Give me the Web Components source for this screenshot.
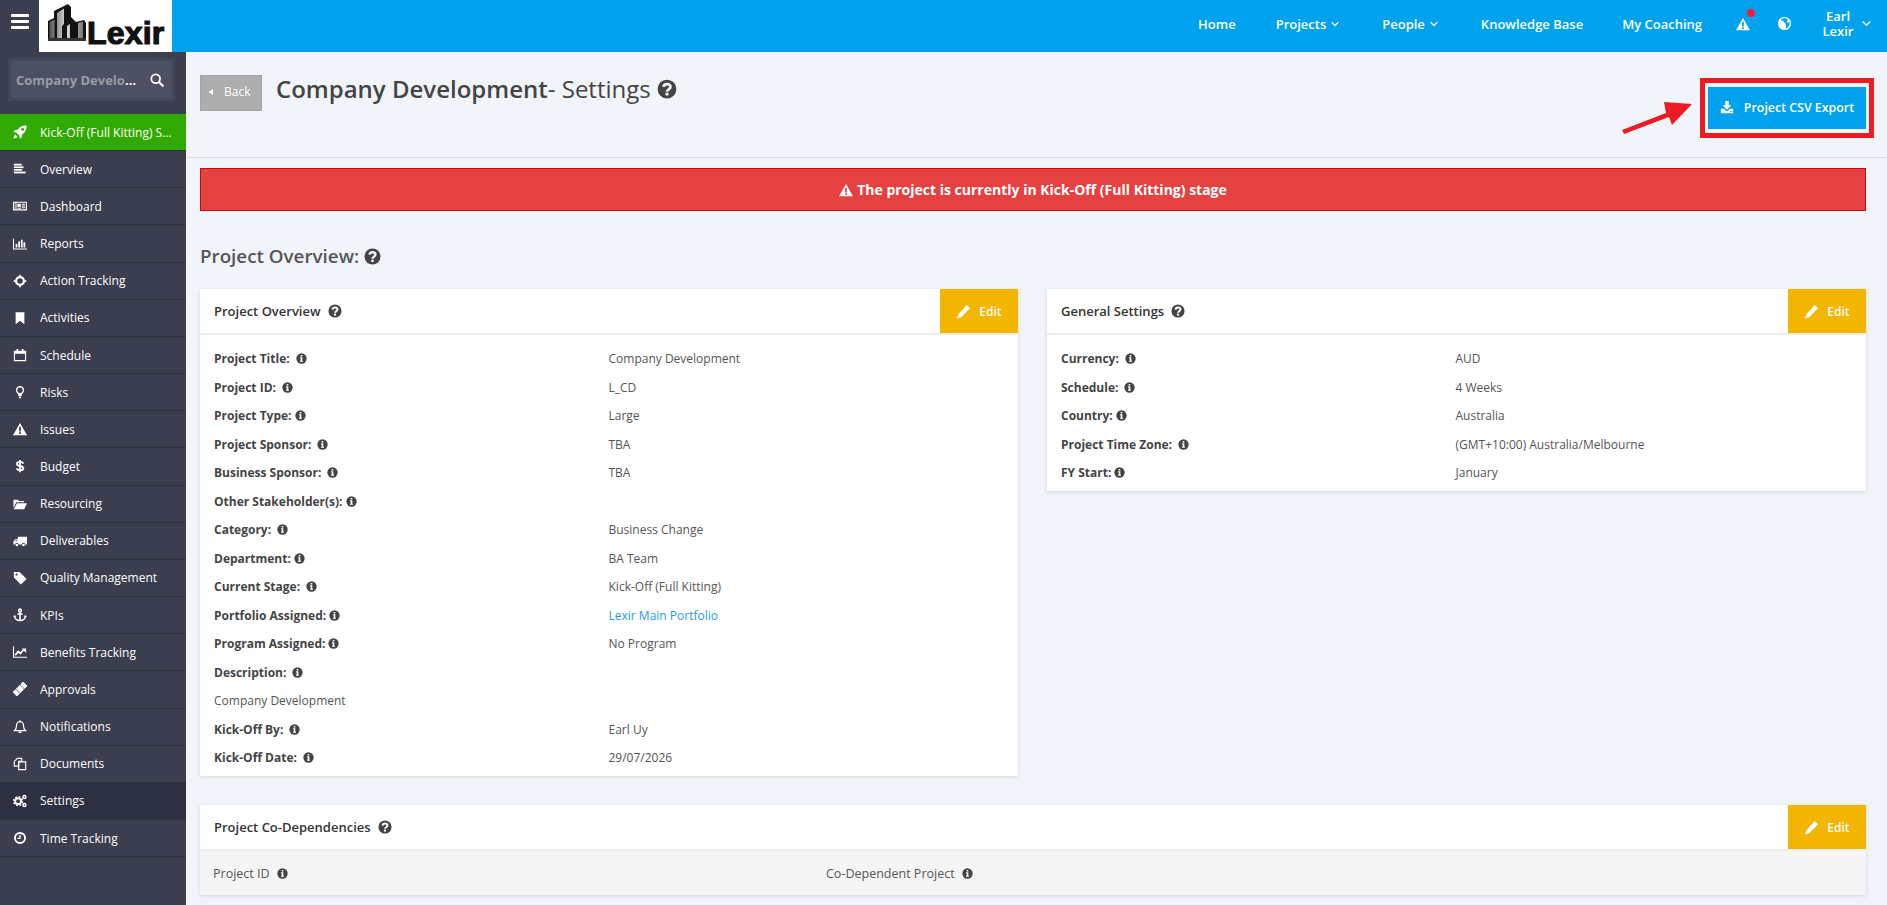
<!DOCTYPE html>
<html lang="en"><head><meta charset="utf-8"><title>Lexir</title>
<style>
html,body{margin:0;padding:0;height:905px;overflow:hidden;background:#f1f4f8;font-family:"Open Sans",sans-serif;color:#444}
x-app{--cut:#fff}
</style></head><body>
<x-app>
  <x-topbar slot="top"></x-topbar>
  <x-sidebar slot="side">
    <x-nav-item icon="rocket" kind="stage">Kick-Off (Full Kitting) Stage</x-nav-item>
    <x-nav-item icon="overview">Overview</x-nav-item>
    <x-nav-item icon="dash">Dashboard</x-nav-item>
    <x-nav-item icon="chart">Reports</x-nav-item>
    <x-nav-item icon="cross">Action Tracking</x-nav-item>
    <x-nav-item icon="bookmark">Activities</x-nav-item>
    <x-nav-item icon="calendar">Schedule</x-nav-item>
    <x-nav-item icon="bulb">Risks</x-nav-item>
    <x-nav-item icon="warn">Issues</x-nav-item>
    <x-nav-item icon="dollar">Budget</x-nav-item>
    <x-nav-item icon="folder">Resourcing</x-nav-item>
    <x-nav-item icon="truck">Deliverables</x-nav-item>
    <x-nav-item icon="tag">Quality Management</x-nav-item>
    <x-nav-item icon="anchor">KPIs</x-nav-item>
    <x-nav-item icon="line">Benefits Tracking</x-nav-item>
    <x-nav-item icon="ticket">Approvals</x-nav-item>
    <x-nav-item icon="bell">Notifications</x-nav-item>
    <x-nav-item icon="files">Documents</x-nav-item>
    <x-nav-item icon="cogs" kind="active">Settings</x-nav-item>
    <x-nav-item icon="clock">Time Tracking</x-nav-item>
  </x-sidebar>
  <x-page-header slot="main"></x-page-header>
  <x-content slot="main">
    <x-alert>The project is currently in Kick-Off (Full Kitting) stage</x-alert>
    <x-heading>Project Overview:</x-heading>
    <x-columns>
      <x-panel heading="Project Overview" edit>
        <x-row gap="6"><span slot="label">Project Title:</span>Company Development</x-row>
        <x-row gap="6"><span slot="label">Project ID:</span>L_CD</x-row>
        <x-row gap="3"><span slot="label">Project Type:</span>Large</x-row>
        <x-row gap="6"><span slot="label">Project Sponsor:</span>TBA</x-row>
        <x-row gap="6"><span slot="label">Business Sponsor:</span>TBA</x-row>
        <x-row gap="3"><span slot="label">Other Stakeholder(s):</span></x-row>
        <x-row gap="6"><span slot="label">Category:</span>Business Change</x-row>
        <x-row gap="3"><span slot="label">Department:</span>BA Team</x-row>
        <x-row gap="6"><span slot="label">Current Stage:</span>Kick-Off (Full Kitting)</x-row>
        <x-row gap="3"><span slot="label">Portfolio Assigned:</span><x-link>Lexir Main Portfolio</x-link></x-row>
        <x-row gap="3"><span slot="label">Program Assigned:</span>No Program</x-row>
        <x-row gap="6"><span slot="label">Description:</span></x-row>
        <x-row plain>Company Development</x-row>
        <x-row gap="6"><span slot="label">Kick-Off By:</span>Earl Uy</x-row>
        <x-row gap="6"><span slot="label">Kick-Off Date:</span>29/07/2026</x-row>
      </x-panel>
      <x-panel heading="General Settings" edit>
        <x-row gap="6"><span slot="label">Currency:</span>AUD</x-row>
        <x-row gap="6"><span slot="label">Schedule:</span>4 Weeks</x-row>
        <x-row gap="3"><span slot="label">Country:</span>Australia</x-row>
        <x-row gap="6"><span slot="label">Project Time Zone:</span>(GMT+10:00) Australia/Melbourne</x-row>
        <x-row gap="3"><span slot="label">FY Start:</span>January</x-row>
      </x-panel>
    </x-columns>
    <x-panel heading="Project Co-Dependencies" edit flush>
      <x-table-head></x-table-head>
    </x-panel>
  </x-content>
</x-app>
<script>
const ICONS={
 rocket:'<path fill-rule="evenodd" d="M15.5.5C11 .2 7.8 2 5.3 5.4L1.9 6 .5 8.3l3.2.3 3.7 3.7.3 3.2 2.3-1.4.6-3.4C14 8.2 15.8 5 15.5.5zM11 3.4a1.6 1.6 0 1 1 0 3.2 1.6 1.6 0 0 1 0-3.2z"/><path d="M2.6 10.8C1.4 11.8.8 13.6.6 15.4c1.8-.2 3.6-.8 4.6-2z"/>',
 overview:'<rect x="1" y="2" width="9" height="2"/><rect x="1" y="5" width="11" height="2"/><rect x="1" y="8" width="9.500" height="2"/><rect x="1" y="11" width="13.500" height="2"/>',
 dash:'<path fill-rule="evenodd" d="M0 3h16v10H0zM1.500 4.200v7.600h1.300V4.200zM4 4.200v7.600h10.800V4.200z"/><path d="M5 5.500h4v4H5zM10 5.500h4v1h-4zM10 7.500h4v1h-4zM10 9.500h4v1h-4zM5 10.500h4v.8H5z"/>',
 chart:'<path d="M0 2h1.200v11H16v1.200H0z"/><path d="M3 8h2v4H3zM6 5h2v7H6zM9 3h2v9H9zM12 6h2v6h-2z"/>',
 cross:'<circle cx="8" cy="8" r="4.500" fill="none" stroke="currentColor" stroke-width="2.600"/><path d="M7 .8h2v3H7zM7 12.200h2v3H7zM.8 7h3v2h-3zM12.200 7h3v2h-3z"/>',
 bookmark:'<path d="M3 1.500h10v13.500L8 11l-5 4z"/>',
 calendar:'<path fill-rule="evenodd" d="M1 3h14v12H1zM2.300 6.500v7.200h11.400V6.500z"/><path d="M4 1h2v3.500H4zM10 1h2v3.500h-2z"/>',
 bulb:'<circle cx="8" cy="6" r="3.900" fill="none" stroke="currentColor" stroke-width="1.700"/><path d="M6 10h4v2.500H6zM6.800 13h2.400v2H6.800z"/>',
 warn:'<path fill-rule="evenodd" d="M8 1l8 14H0zM7 5.500v5.300h2V5.500zM7 11.800v2h2v-2z"/>',
 dollar:'<path fill="none" stroke="currentColor" stroke-width="2.200" d="M11.800 5.300C11.300 4 10 3.300 8 3.300S4.500 4.200 4.500 5.600 6 7.500 8 8s3.800 1.100 3.800 2.600-1.700 2.300-3.800 2.300-3.400-.8-3.900-2.100"/><path d="M7 1h2v14H7z"/>',
 folder:'<path d="M.5 3h5L7 4.500h5.500V6H3.800L.5 12.500z"/><path d="M4.500 7H16l-3.200 7H.8z"/>',
 truck:'<path fill-rule="evenodd" d="M5.500 3H16v9h-2a2 2 0 0 0-4 0H6.500a2 2 0 0 0-4 0H.5V8.500L2.500 6h3zM2.200 8.200h2.300V7H3.200z"/><circle cx="4.500" cy="12.500" r="1.500"/><circle cx="12" cy="12.500" r="1.500"/>',
 tag:'<path fill-rule="evenodd" d="M1 1h6.500L15.500 9 9 15.500 1 7.500zM4 2.800a1.300 1.300 0 1 0 0 2.600 1.300 1.300 0 0 0 0-2.600z"/>',
 anchor:'<g fill="none" stroke="currentColor" stroke-width="1.800"><circle cx="8" cy="2.800" r="1.500"/><path d="M8 4.300V14M5 6.800h6M1.800 9.500c0 3 3 4.800 6.200 4.800s6.200-1.800 6.200-4.800"/></g><path d="M0 10l2-2 2 2zM12 10l2-2 2 2z"/>',
 line:'<path d="M0 1.500h1.200v12H16v1.200H0z"/><path fill="none" stroke="currentColor" stroke-width="2" d="M2.500 11.500l3.500-4 2.500 2.200 3.300-4"/><path d="M10 4h5v5z"/>',
 ticket:'<g transform="rotate(-45 8 8)"><rect x="-.5" y="4.500" width="17" height="7"/><path stroke="var(--cut-side,#3a3e4e)" stroke-width="1.200" stroke-dasharray="1.300 1" d="M4.500 4.500v7M11.500 4.500v7"/></g>',
 bell:'<path fill="none" stroke="currentColor" stroke-width="1.400" d="M8 2c2.800 0 4 2 4 4.500 0 3 .8 4.500 2.300 5.700H1.700C3.200 11 4 9.500 4 6.500 4 4 5.200 2 8 2z"/><path d="M7 .6h2V2.500H7zM6 13h4a2 2 0 0 1-4 0z"/>',
 files:'<g fill="none" stroke="currentColor" stroke-width="1.300"><path d="M5 1.500h5v3.500H6.500v5.500H1.500V5z"/><path d="M6.500 5.500H14.500V14.500H6.500z"/></g>',
 cogs:'<circle cx="5.800" cy="8.200" r="3.300" fill="none" stroke="currentColor" stroke-width="2.200"/><circle cx="5.800" cy="8.200" r="5" fill="none" stroke="currentColor" stroke-width="1.800" stroke-dasharray="2 1.930"/><circle cx="13" cy="3.500" r="1.700" fill="none" stroke="currentColor" stroke-width="1.700"/><circle cx="13" cy="12.500" r="1.700" fill="none" stroke="currentColor" stroke-width="1.700"/>',
 clock:'<circle cx="8" cy="8" r="5.800" fill="none" stroke="currentColor" stroke-width="2.200"/><path d="M7.200 4.500h1.600v4.700H5V7.800h2.200z"/>',
 search:'<circle cx="6.500" cy="6.500" r="5" fill="none" stroke="currentColor" stroke-width="2"/><path stroke="currentColor" stroke-width="2.600" stroke-linecap="round" d="M10.500 10.500l4 4"/>',
 download:'<path d="M6 1h4v5h3L8 11 3 6h3z"/><path fill-rule="evenodd" d="M1 10h3.500L8 13l3.500-3H15v5H1zM11.500 12.700v.9h.9v-.9zM13.200 12.700v.9h.9v-.9z"/>',
 pencil:'<path d="M11.500 1L15 4.500 5.500 14 1 15.500l1.500-4.500z"/>',
 globe:'<path fill-rule="evenodd" d="M8 1a7 7 0 1 1 0 14A7 7 0 0 1 8 1zM4 4.500c1.500.3 3 .8 3.500 2 .6 1.200 2 1.300 2 2.800 0 1.300.7 2.500-.5 4.200 2-.5 4.500-2.500 4.500-5.500 0-.7-.1-1.200-.3-1.800L11 7.500c-.7-1-.3-2.700.8-3.700-1-.8-2.300-1.300-3.800-1.300-1.600 0-3 .8-4 2z"/>',
 chevron:'<path fill="none" stroke="currentColor" stroke-width="2" d="M2.500 5l5.500 5.500L13.500 5"/>',
 back:'<path d="M11 3v10L4 8z"/>',
 info:'<circle cx="8" cy="8" r="7.500"/><path style="fill:var(--cut,#fff)" d="M6.800 3h2.400v2.200H6.800zM5.800 6.300h3.400v5h1v1.400H5.800v-1.400h1V7.700h-1z"/>',
 help:'<circle cx="8" cy="8" r="7.500"/><path style="fill:none;stroke:var(--cut,#fff)" stroke-width="2.200" d="M5.200 6.300C5.400 4.800 6.500 4 8 4s2.800.9 2.800 2.200c0 2-2.800 2-2.800 3.900"/><rect x="6.800" y="11" width="2.400" height="2.200" style="fill:var(--cut,#fff)"/>'
};
function shadow(el,html){const r=el.attachShadow({mode:'open'});r.innerHTML=html;return r;}
function define(name,html){customElements.define(name,class extends HTMLElement{constructor(){super();shadow(this,typeof html==='function'?html(this):html)}});}

customElements.define('x-icon',class extends HTMLElement{
 connectedCallback(){ if(this.shadowRoot)return;
  const s=this.getAttribute('size')||14;
  shadow(this,`<style>:host{display:inline-flex;flex:none;width:${s}px;height:${s}px;vertical-align:middle}svg{display:block;width:100%;height:100%;fill:currentColor}</style><svg viewBox="0 0 16 16" aria-hidden="true">${ICONS[this.getAttribute('name')]||''}</svg>`);
 }
});

define('x-app',`<style>:host{display:grid;grid-template-columns:186px 1fr;grid-template-rows:52px 853px;width:1887px;height:905px;overflow:hidden}
.t{grid-column:1/3;display:block}.s{display:block}.m{display:block;min-width:0;overflow:hidden}</style>
<div class="t"><slot name="top"></slot></div><div class="s"><slot name="side"></slot></div><div class="m"><slot name="main"></slot></div>`);

define('x-nav-link',`<style>:host{display:inline-flex;align-items:center;gap:4px;font:600 13px "Open Sans",sans-serif;color:#fff;white-space:nowrap}</style><slot></slot>`);

define('x-topbar',`<style>
:host{display:flex;height:52px;background:#00a2ed;color:#fff;align-items:stretch}
.burger{width:39px;background:#3a3e4e;display:flex;flex-direction:column;gap:3px;align-items:center;justify-content:center;padding-bottom:9px;box-sizing:border-box}
.burger i{display:block;width:18px;height:3px;background:#fff;border-radius:1px}
.logo{width:133px;background:#fff;display:flex;align-items:flex-start;box-sizing:border-box;padding:4px 0 0 9px}
.logo svg{width:38px;height:37px;flex:none}
.logo span{font:700 32px/1 "Liberation Sans",Arial,sans-serif;color:#111;-webkit-text-stroke:1.2px #111;margin:13px 0 0 1px;letter-spacing:.2px}
nav{margin-left:auto;display:flex;align-items:center;padding:0 15px 5px 0;box-sizing:border-box}
.alert{position:relative;display:flex;margin-left:34px}
.dot{position:absolute;right:-5px;top:-8px;width:8px;height:8px;background:#ff1744;border-radius:50%}
.user{font:600 13px/15px "Open Sans",sans-serif;text-align:center;margin-left:23px;width:46px}
</style>
<div class="burger"><i></i><i></i><i></i></div>
<div class="logo"><svg viewBox="0 0 38 37"><defs><linearGradient id="g" x1="0" x2="1"><stop offset="0" stop-color="#555"/><stop offset=".5" stop-color="#ddd"/><stop offset="1" stop-color="#777"/></linearGradient></defs>
<path fill="#111" d="M0 37V17l6-3V7L20 0l3 3v10l5 5 8-2 2 3v18H0z"/><path fill="url(#g)" d="M1.500 34V18l5-2.500V34zM9 34V9l7-4.500V20l-2 2v12zM30 34V19l5-1.500V34zM19 34V22l3-2v14z"/><path fill="#333" d="M0 34h38v3H0z"/></svg><span>Lexir</span></div>
<nav>
<x-nav-link>Home</x-nav-link>
<x-nav-link style="margin-left:40px">Projects <x-icon name="chevron" size="10"></x-icon></x-nav-link>
<x-nav-link style="margin-left:42px">People <x-icon name="chevron" size="10"></x-icon></x-nav-link>
<x-nav-link style="margin-left:42px">Knowledge Base</x-nav-link>
<x-nav-link style="margin-left:39px">My Coaching</x-nav-link>
<div class="alert"><x-icon name="warn" size="14"></x-icon><span class="dot"></span></div>
<x-icon name="globe" size="15" style="margin-left:27px"></x-icon>
<div class="user">Earl<br>Lexir</div>
<x-icon name="chevron" size="11"></x-icon>
</nav>`);

define('x-sidebar',`<style>
:host{display:block;width:186px;height:853px;background:#3a3e4e;color:#fff;box-sizing:border-box;padding-top:6px;font:400 12px "Open Sans",sans-serif}
.search{margin:0 11px 0 8px;height:43px;box-sizing:border-box;background:#4d5062;border:3px solid #444757;display:flex;align-items:center;padding:0 8px 0 5px;justify-content:space-between}
.q{font:700 13px "Open Sans",sans-serif;color:#fff;width:122px;white-space:nowrap;overflow:hidden;text-overflow:ellipsis}
.q b{color:#9a9ca6;font-weight:700}
.list{margin-top:13px}
</style>
<div class="search"><span class="q"><b>Company Development</b></span><x-icon name="search" size="14"></x-icon></div>
<div class="list"><slot></slot></div>`);

define('x-nav-item',el=>{
 const k=el.getAttribute('kind');
 const bg=k==='stage'?'#30a900':k==='active'?'#2d3040':'transparent';
 return `<style>:host{display:flex;align-items:center;height:37.160px;box-sizing:border-box;background:${bg};border-bottom:1px solid #2e3140;color:#fff;font:400 12px "Open Sans",sans-serif;--cut-side:${k==='stage'?'#30a900':'#3a3e4e'}}
 .i{width:40px;flex:none;display:flex;justify-content:center;}
 .t{overflow:hidden;white-space:nowrap;text-overflow:ellipsis;width:133px}</style>
 <span class="i"><x-icon name="${el.getAttribute('icon')}" size="14"></x-icon></span><span class="t"><slot></slot></span>`;
});

define('x-page-header',`<style>
:host{display:flex;position:relative;height:106px;box-sizing:border-box;padding:23px 21px 0 14px;border-bottom:1px solid #d4dfe9;--cut:#f1f4f8;align-items:flex-start}
.back{width:62px;height:36px;box-sizing:border-box;background:#adadad;border:1px solid #a3a3a3;color:#fff;font:400 12px "Open Sans",sans-serif;display:flex;align-items:center;gap:8px;padding:0 0 3px 5px}
h1{margin:-3px 0 0 14px;font:400 24px/33px "Open Sans",sans-serif;color:#444;display:flex;align-items:center;white-space:pre}
h1 b{font-weight:600}
.export{margin-left:auto;margin-top:12px;width:158px;height:42px;box-sizing:border-box;background:#00a2ed;color:#fff;font:600 12.400px "Open Sans",sans-serif;display:flex;align-items:center;justify-content:center;gap:10px;white-space:nowrap;padding-bottom:2px}
.box{position:absolute;right:13px;top:26px;width:174px;height:60px;box-sizing:border-box;border:5px solid #ed1c24;pointer-events:none}
.arrow{position:absolute;left:1434px;top:48px;width:72px;height:36px;overflow:visible}
</style>
<div class="back"><x-icon name="back" size="10"></x-icon>Back</div>
<h1><b>Company Development</b>- Settings <x-icon name="help" size="20" style="color:#444"></x-icon></h1>
<div class="export"><x-icon name="download" size="14"></x-icon>Project CSV Export</div>
<div class="box"></div>
<svg class="arrow" viewBox="0 0 72 36"><path fill="#ed1c24" d="M2 30L46 13 44 2 72 4 52 25 49 17 4 34z"/></svg>`);

define('x-content',`<style>:host{display:block;padding:10px 21px 0 14px}</style><slot></slot>`);

define('x-alert',`<style>:host{display:flex;height:43px;box-sizing:border-box;align-items:center;justify-content:center;gap:4px;background:#e54141;border:1px solid #c30d14;color:#fff;font:700 14px "Open Sans",sans-serif}</style><x-icon name="warn" size="14"></x-icon><span><slot></slot></span>`);

define('x-heading',`<style>:host{display:flex;align-items:center;gap:5px;height:25px;margin:33px 0 20px;font:600 18.800px/25px "Open Sans",sans-serif;color:#555;--cut:#f1f4f8}</style><slot></slot><x-icon name="help" size="17" style="color:#444"></x-icon>`);

define('x-columns',`<style>:host{display:grid;grid-template-columns:818px 819px;gap:29px;align-items:start;margin-bottom:29px}</style><slot></slot>`);

define('x-panel',el=>`<style>
:host{display:block;background:#fff;box-shadow:0 1px 4px rgba(0,0,0,.12);--cut:#fff}
.h{display:flex;align-items:center;height:46px;box-sizing:border-box;border-bottom:2px solid #eee;padding-left:14px;font:600 13px "Open Sans",sans-serif;color:#333;gap:7px}
.e{margin-left:auto;align-self:flex-start;width:78px;height:44px;background:#f3b500;color:#fff;display:flex;align-items:center;justify-content:center;gap:8px;font:600 12px "Open Sans",sans-serif}
.b{padding:${el.hasAttribute('flush')?'0':'9.500px 14px 4px'}}
</style>
<div class="h"><span>${el.getAttribute('heading')}</span><x-icon name="help" size="14" style="color:#444"></x-icon><div class="e"><x-icon name="pencil" size="15"></x-icon>Edit</div></div>
<div class="b"><slot></slot></div>`);

define('x-row',el=>el.hasAttribute('plain')?
 `<style>:host{display:block;height:28.500px;font:400 12px/27px "Open Sans",sans-serif;color:#555}</style><slot></slot>`:
 `<style>:host{display:grid;grid-template-columns:394.500px 1fr;height:28.500px;align-items:center;font:400 12px "Open Sans",sans-serif;color:#555}
 .l{display:flex;align-items:center;gap:${el.getAttribute('gap')}px;font-weight:700;color:#444}</style>
 <div class="l"><slot name="label"></slot><x-icon name="info" size="11" style="color:#444"></x-icon></div><div><slot></slot></div>`);

define('x-link',`<style>:host{color:#1f9be8}</style><slot></slot>`);

define('x-table-head',`<style>:host{display:grid;grid-template-columns:613px 1fr;height:44px;align-items:center;background:#f5f5f5;padding-left:13px;font:400 12.500px "Open Sans",sans-serif;color:#555}
.c{display:flex;align-items:center;gap:7px}</style>
<div class="c"><span>Project ID</span><x-icon name="info" size="11" style="color:#444"></x-icon></div><div class="c"><span>Co-Dependent Project</span><x-icon name="info" size="11" style="color:#444"></x-icon></div>`);
</script>
</body></html>
